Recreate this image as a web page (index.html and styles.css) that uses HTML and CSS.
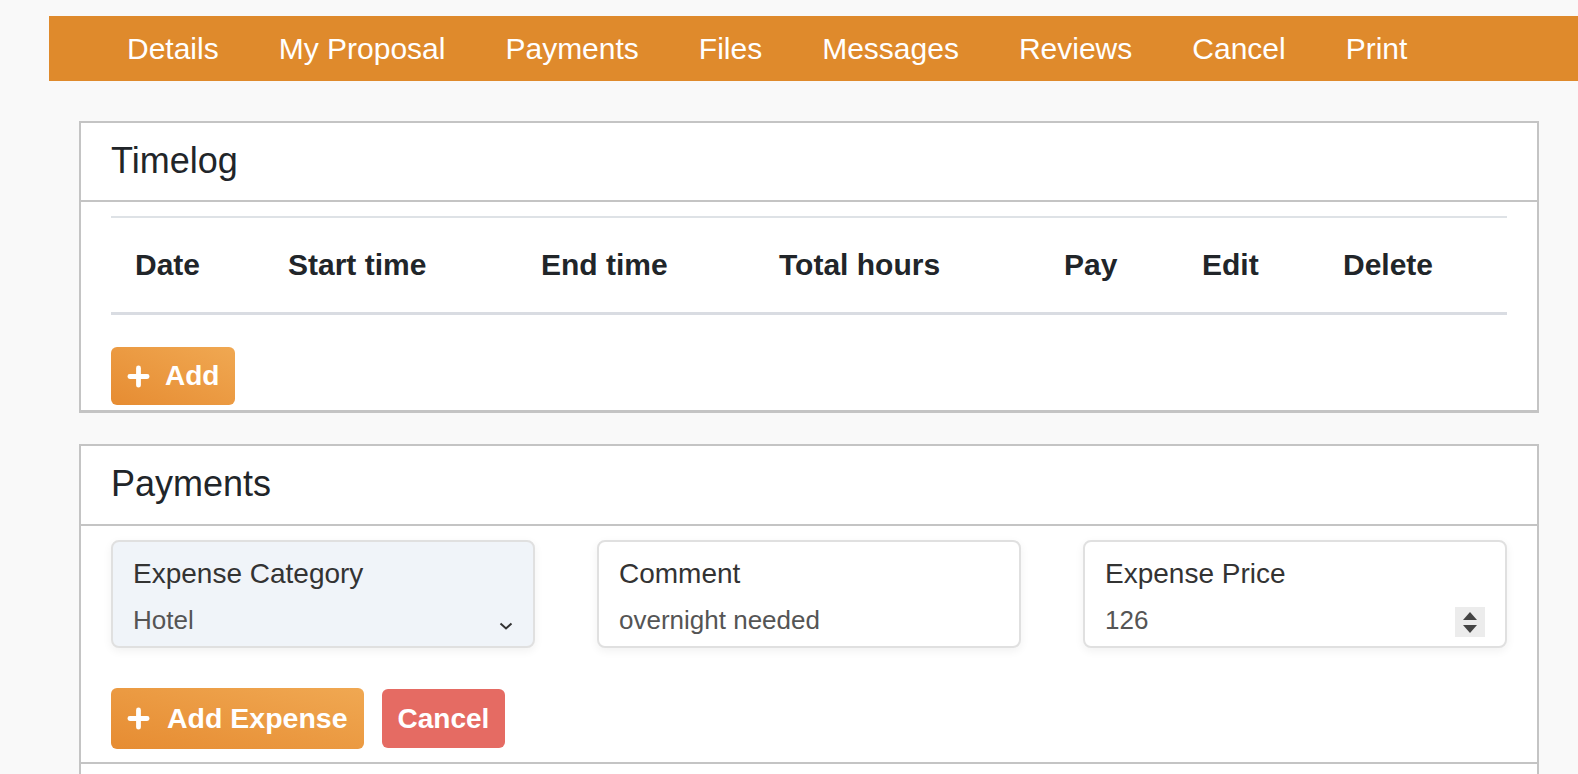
FILE: index.html
```html
<!DOCTYPE html>
<html lang="en">
<head>
    <meta charset="UTF-8">
    <meta name="viewport" content="width=device-width, initial-scale=1.0">
    <title>Job - Timelog and Payments</title>
    <link rel="stylesheet" href="styles.css">
</head>
<body>
    <nav class="tabs">
        <a href="#">Details</a>
        <a href="#">My Proposal</a>
        <a href="#">Payments</a>
        <a href="#">Files</a>
        <a href="#">Messages</a>
        <a href="#">Reviews</a>
        <a href="#">Cancel</a>
        <a href="#">Print</a>
    </nav>

    <main class="page">
        <section class="card timelog-card">
            <div class="card-header">Timelog</div>
            <div class="card-body">
                <table class="timelog">
                    <colgroup>
                        <col class="col-date">
                        <col class="col-start">
                        <col class="col-end">
                        <col class="col-total">
                        <col class="col-pay">
                        <col class="col-edit">
                        <col class="col-delete">
                    </colgroup>
                    <thead>
                        <tr>
                            <th>Date</th>
                            <th>Start time</th>
                            <th>End time</th>
                            <th>Total hours</th>
                            <th>Pay</th>
                            <th>Edit</th>
                            <th>Delete</th>
                        </tr>
                    </thead>
                </table>
                <button class="btn btn-orange" id="addTimeBtn">
                    <svg class="plus" viewBox="0 0 24 24"><path d="M12 3v18M3 12h18"/></svg>
                    Add
                </button>
            </div>
        </section>

        <section class="card payments-card">
            <div class="card-header">Payments</div>
            <div class="card-body">
                <div class="expense-fields">
                    <div class="field field-select">
                        <label for="expenseCategory">Expense Category</label>
                        <div class="field-control">
                            <select id="expenseCategory">
                                <option>Hotel</option>
                                <option>Travel</option>
                                <option>Meals</option>
                            </select>
                            <svg class="chevron" viewBox="0 0 14 8"><path d="M1.5 1.5l5.5 5 5.5-5"/></svg>
                        </div>
                    </div>
                    <div class="field">
                        <label for="expenseComment">Comment</label>
                        <div class="field-control">
                            <input type="text" id="expenseComment" value="overnight needed">
                        </div>
                    </div>
                    <div class="field">
                        <label for="expensePrice">Expense Price</label>
                        <div class="field-control">
                            <input type="text" id="expensePrice" value="126">
                            <span class="spinner">
                                <svg viewBox="0 0 30 30"><path d="M8 13h14l-7-8z"/><path d="M8 18h14l-7 8z"/></svg>
                            </span>
                        </div>
                    </div>
                </div>
                <div class="actions">
                    <button class="btn btn-orange btn-wide" id="addExpenseBtn">
                        <svg class="plus" viewBox="0 0 24 24"><path d="M12 3v18M3 12h18"/></svg>
                        Add Expense
                    </button>
                    <button class="btn btn-red" id="cancelExpenseBtn">Cancel</button>
                </div>
            </div>
            <div class="card-footer"></div>
        </section>
    </main>
</body>
</html>
```

FILE: styles.css
```css
body {
    margin: 0;
    padding-top: 16px;
    background-color: #f9f9f9;
    font-family: "Liberation Sans", Arial, Helvetica, sans-serif;
    color: #212529;
}

/* top tab bar */
.tabs {
    display: flex;
    align-items: center;
    height: 65px;
    margin-left: 49px;
    padding-left: 48px;
    background-color: #df8a2c;
}
.tabs a {
    padding: 0 30px;
    color: #fff;
    font-size: 30px;
    text-decoration: none;
}

.page {
    padding: 40px 39px 0 79px;
}

/* cards */
.card {
    background: #fff;
    border: 2px solid #c4c4c4;
    border-bottom-width: 3px;
    margin-bottom: 31px;
}
.card-header {
    display: flex;
    align-items: center;
    height: 79px;
    padding: 0 30px 2px;
    box-sizing: border-box;
    border-bottom: 2px solid #c4c4c4;
    font-size: 36px;
}
.payments-card .card-header {
    height: 80px;
}
.card-body {
    padding: 14px 30px 5px;
}
.payments-card .card-body {
    padding: 14px 30px 13px;
}
.card-footer {
    height: 60px;
    border-top: 2px solid #c4c4c4;
}

/* timelog table */
.timelog {
    width: 100%;
    table-layout: fixed;
    border-collapse: separate;
    border-spacing: 0;
}
.timelog th {
    padding: 0 24px;
    line-height: 94px;
    font-size: 30px;
    text-align: left;
    white-space: nowrap;
    border-top: 2px solid #dee2e6;
    border-bottom: 3px solid #d9dce2;
}
.col-date { width: 153px; }
.col-start { width: 253px; }
.col-end { width: 238px; }
.col-total { width: 285px; }
.col-pay { width: 138px; }
.col-edit { width: 141px; }
.col-delete { width: 188px; }

/* buttons */
.btn {
    display: inline-flex;
    align-items: center;
    gap: 15px;
    height: 58px;
    padding: 0 16px;
    border: none;
    border-radius: 6px;
    color: #fff;
    font-family: inherit;
    font-size: 28px;
    font-weight: bold;
    cursor: pointer;
}
.timelog-card .btn {
    margin-top: 32px;
}
.btn-orange {
    background: linear-gradient(to top right, #e68c32, #f0a852);
}
.btn-wide {
    gap: 17px;
    height: 61px;
    font-size: 28.5px;
}
.btn-red {
    height: 59px;
    background-color: #e56b63;
}
.plus {
    width: 23px;
    height: 23px;
    fill: none;
    stroke: #fff;
    stroke-width: 5;
    stroke-linecap: round;
}
.actions {
    display: flex;
    align-items: center;
    gap: 18px;
    margin-top: 40px;
}

/* expense form */
.expense-fields {
    display: grid;
    grid-template-columns: repeat(3, 1fr);
    column-gap: 62px;
}
.field {
    display: flex;
    flex-direction: column;
    gap: 13px;
    padding: 15px 20px 10px;
    border: 2px solid #e0e0e0;
    border-radius: 8px;
    background: #fff;
    box-shadow: 0 3px 10px rgba(0,0,0,0.06);
}
.field-select {
    background-color: #f0f4f9;
}
.field label {
    line-height: 34px;
    font-size: 28px;
    color: #333;
}
.field-control {
    display: flex;
    align-items: center;
    height: 32px;
}
.field input, .field select {
    flex-grow: 1;
    min-width: 0;
    height: 32px;
    padding: 0;
    border: none;
    outline: none;
    background: transparent;
    font-family: inherit;
    font-size: 26px;
    color: #555;
    appearance: none;
    -webkit-appearance: none;
}
.chevron {
    width: 14px;
    height: 8px;
    margin-top: 12px;
    fill: none;
    stroke: #333;
    stroke-width: 2;
}
.spinner {
    display: flex;
    width: 30px;
    height: 30px;
    margin-top: 3px;
    background-color: #ececec;
}
.spinner svg {
    width: 30px;
    height: 30px;
    fill: #444;
}
```
